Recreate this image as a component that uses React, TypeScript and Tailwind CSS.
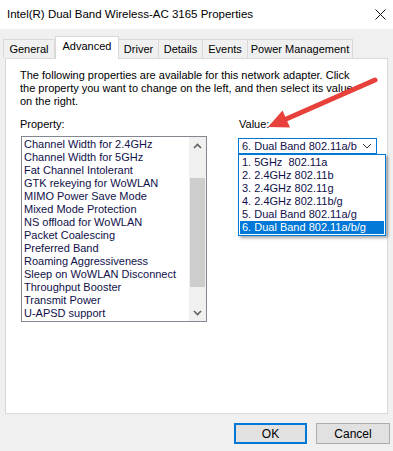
import React from 'react'

const properties = [
  'Channel Width for 2.4GHz',
  'Channel Width for 5GHz',
  'Fat Channel Intolerant',
  'GTK rekeying for WoWLAN',
  'MIMO Power Save Mode',
  'Mixed Mode Protection',
  'NS offload for WoWLAN',
  'Packet Coalescing',
  'Preferred Band',
  'Roaming Aggressiveness',
  'Sleep on WoWLAN Disconnect',
  'Throughput Booster',
  'Transmit Power',
  'U-APSD support',
]

const values = [
  '1. 5GHz\u00a0\u00a0802.11a',
  '2. 2.4GHz 802.11b',
  '3. 2.4GHz 802.11g',
  '4. 2.4GHz 802.11b/g',
  '5. Dual Band 802.11a/g',
  '6. Dual Band 802.11a/b/g',
]

const tabs = [
  { label: 'General', w: 'w-[52px]' },
  { label: 'Advanced', w: 'w-[64px]', active: true },
  { label: 'Driver', w: 'w-[41px]' },
  { label: 'Details', w: 'w-[45px]' },
  { label: 'Events', w: 'w-[46px]' },
  { label: 'Power Management', w: 'w-[106px]' },
]

function Chevron({ up }: { up?: boolean }) {
  return (
    <svg width="9" height="6" viewBox="0 0 9 6">
      <polyline
        points={up ? '1,5 4.5,1.5 8,5' : '1,1 4.5,4.5 8,1'}
        fill="none"
        stroke="#606060"
        strokeWidth="1.6"
      />
    </svg>
  )
}

export default function App() {
  return (
    <div className="relative w-[393px] h-[451px] overflow-hidden bg-[#f0f0f0] text-black font-['Liberation_Sans',Arial,sans-serif]">
      {/* title bar */}
      <div className="h-[29px] bg-white flex items-center justify-between pl-[7px] pr-[6px]">
        <span className="text-[11.5px]">Intel(R) Dual Band Wireless-AC 3165 Properties</span>
        <svg width="11" height="11" viewBox="0 0 11 11" className="mr-[1px]">
          <path d="M0.5 0.5 L10.5 10.5 M10.5 0.5 L0.5 10.5" stroke="#111" strokeWidth="1" />
        </svg>
      </div>

      {/* tabs */}
      <div className="mt-[7px] h-[22px] flex items-end pl-[3px] text-[11px]">
        {tabs.map((t) =>
          t.active ? (
            <div
              key={t.label}
              className={`${t.w} relative z-10 -mb-px h-[23px] pb-[3px] flex items-center justify-center border border-b-0 border-[#d9d9d9] bg-white`}
            >
              {t.label}
            </div>
          ) : (
            <div
              key={t.label}
              className={`${t.w} h-[19px] -ml-px first:ml-0 flex items-center justify-center border border-b-0 border-[#d9d9d9] bg-[#f0f0f0]`}
            >
              {t.label}
            </div>
          )
        )}
      </div>

      {/* panel */}
      <div className="mx-[5px] h-[356px] border border-[#d9d9d9] bg-white pl-[14px] pt-[10px] text-[11px]">
        <p className="leading-[13px]">
          The following properties are available for this network adapter. Click
          <br />
          the property you want to change on the left, and then select its value
          <br />
          on the right.
        </p>

        <div className="mt-[10px] flex gap-[31px]">
          <div className="flex flex-col">
            <span className="leading-[12px]">Property:</span>
            <div className="ml-px mt-[6px] w-[186px] h-[186px] border border-[#828790] flex">
              <div className="flex-1 pt-[1px] pl-[2px] text-[#10104a]">
                {properties.map((p) => (
                  <div key={p} className="h-[13px] leading-[13px] whitespace-nowrap">
                    {p}
                  </div>
                ))}
              </div>
              <div className="w-[17px] bg-[#f0f0f0] flex flex-col">
                <div className="h-[17px] flex items-center justify-center">
                  <Chevron up />
                </div>
                <div className="h-[24px]" />
                <div className="h-[109px] mx-[1px] bg-[#cdcdcd]" />
                <div className="flex-1" />
                <div className="h-[17px] flex items-center justify-center">
                  <Chevron />
                </div>
              </div>
            </div>
          </div>

          <div className="flex flex-col">
            <span className="leading-[12px] pl-px">Value:</span>
            <div className="relative mt-[8px]">
              <div className="w-[139px] h-[16px] border border-[#0078d7] bg-white flex items-center justify-between pl-[3px] pr-[4px] text-[#10104a]">
                <span>6. Dual Band 802.11a/b</span>
                <svg width="10" height="6" viewBox="0 0 10 6">
                  <polyline points="1,1 5,5 9,1" fill="none" stroke="#333" strokeWidth="1" />
                </svg>
              </div>
              <div className="absolute left-0 top-full z-20 w-[148px] border border-[#0078d7] bg-white py-[1px] shadow-[2px_2px_3px_rgba(0,0,0,0.35)] text-[#10104a]">
                {values.map((v, i) => (
                  <div
                    key={v}
                    className={`h-[13px] leading-[13px] pl-[2px] mx-px whitespace-nowrap ${
                      i === values.length - 1 ? 'bg-[#0078d7] text-white' : ''
                    }`}
                  >
                    {v}
                  </div>
                ))}
              </div>
            </div>
          </div>
        </div>
      </div>

      {/* buttons */}
      <div className="mt-[9px] flex justify-end gap-[9px] pr-[3px] text-[12px]">
        <button className="w-[73px] h-[21px] border-2 border-[#0078d7] bg-[#e1e1e1]">OK</button>
        <button className="w-[74px] h-[21px] border border-[#adadad] bg-[#e1e1e1]">Cancel</button>
      </div>

      {/* red annotation arrow */}
      <svg className="absolute inset-0 z-30 pointer-events-none" width="393" height="451" viewBox="0 0 393 451">
        <line x1="375" y1="80" x2="284" y2="120" stroke="#e8403b" strokeWidth="5" strokeLinecap="round" />
        <polygon points="268,127 290,127.5 282.5,110.5" fill="#e8403b" />
      </svg>
    </div>
  )
}
